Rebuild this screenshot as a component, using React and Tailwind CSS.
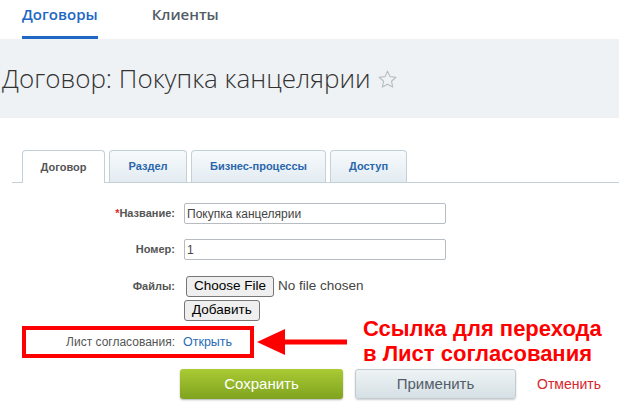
export default function App() {
  const arial = { fontFamily: '"Liberation Sans", Arial, sans-serif' };
  return (
    <div className="w-[619px] h-[408px] overflow-hidden bg-white" style={arial}>
      {/* Top nav */}
      <div className="h-[39px] flex items-end pl-[22px] gap-[54px] font-['Open_Sans',sans-serif] text-[15px] font-semibold">
        <div className="h-[39px] flex flex-col justify-between">
          <span className="text-[#2067c4] pt-[3px]">Договоры</span>
          <div className="h-[3px] bg-[#2067c4]" />
        </div>
        <div className="h-[39px]">
          <span className="text-[#535c69] block pt-[3px]">Клиенты</span>
        </div>
      </div>

      {/* Title band */}
      <div className="h-[79px] bg-[#eef2f4] flex items-center pl-[2px] gap-[6px]">
        <h1 className="font-['Open_Sans',sans-serif] font-light text-[26px] text-[#333] leading-none pb-[1px]">
          Договор: Покупка канцелярии
        </h1>
        <svg width="21" height="21" viewBox="0 0 24 24" className="mt-[2px]">
          <path
            d="M12 2.5l2.9 6.2 6.7.7-5 4.6 1.4 6.7L12 17.3l-5.9 3.4 1.4-6.7-5-4.6 6.7-.7z"
            fill="none"
            stroke="#b9bdc2"
            strokeWidth="1.3"
            strokeLinejoin="round"
          />
        </svg>
      </div>

      {/* Tabs */}
      <div className="mt-[32px] ml-[12px] border-b border-[#c3d0d6] flex items-end gap-[4px] pl-[10px] h-[33px]">
        <div className="h-[33px] w-[83px] -mb-px bg-white border border-b-0 border-[#c3d0d6] rounded-t-[4px] flex items-center justify-center text-[11px] font-bold text-[#555]">
          Договор
        </div>
        {[
          ["Раздел", "w-[78px]"],
          ["Бизнес-процессы", "w-[135px]"],
          ["Доступ", "w-[77px]"],
        ].map(([t, w]) => (
          <div
            key={t}
            className={`h-[32px] ${w} bg-gradient-to-b from-[#f7fafc] to-[#e3ecf2] border border-b-0 border-[#c3d0d6] rounded-t-[4px] flex items-center justify-center text-[11px] font-bold text-[#2a66ac]`}
          >
            {t}
          </div>
        ))}
      </div>

      {/* Form */}
      <div className="text-[11px] pt-[20px]">
        <div className="flex items-center gap-[9px] h-[21px]">
          <div className="w-[175px] text-right font-bold text-[#555]">
            <span className="text-[#e0262b]">*</span>Название:
          </div>
          <div className="w-[262px] h-[21px] border border-[#b6bcc2] rounded-[2px] flex items-center px-[2px] text-[12px] text-[#444]">
            Покупка канцелярии
          </div>
        </div>
        <div className="flex items-center gap-[9px] h-[21px] mt-[15px]">
          <div className="w-[175px] text-right font-bold text-[#555]">Номер:</div>
          <div className="w-[262px] h-[21px] border border-[#b6bcc2] rounded-[2px] flex items-center px-[2px] text-[12px] text-[#444]">
            1
          </div>
        </div>
        <div className="flex items-start gap-[9px] mt-[16px]">
          <div className="w-[175px] text-right font-bold text-[#555] pt-[2px]">Файлы:</div>
          <div className="flex flex-col items-start gap-[3px] text-[13.5px]">
            <div className="flex items-center gap-[4px] ml-[2px]">
              <div className="h-[21px] px-[7px] bg-[#efefef] border border-[#767676] rounded-[3px] flex items-center text-black">
                Choose File
              </div>
              <span className="text-[#444]">No file chosen</span>
            </div>
            <div className="h-[21px] px-[7px] bg-[#efefef] border border-[#767676] rounded-[3px] flex items-center text-black">
              Добавить
            </div>
          </div>
        </div>

        {/* Highlighted row with annotation */}
        <div className="flex items-center h-[32px] mt-[5px] ml-[22px]">
          <div className="w-[232px] h-[32px] border-4 border-[#ff0000] flex items-center gap-[8px] text-[12px]">
            <div className="w-[149px] text-right text-[#555]">Лист согласования:</div>
            <span className="text-[#2a6bb7] text-[12.5px]">Открыть</span>
          </div>
          <svg width="92" height="28" viewBox="0 0 92 28" className="ml-[3px]">
            <polygon points="0,14 28,1 28,27" fill="#ff0000" />
            <rect x="26" y="11.5" width="64" height="5" fill="#ff0000" />
          </svg>
          <div className="ml-[14px] text-[22px] font-bold leading-[25px] text-[#ff0000] whitespace-nowrap -mt-[2px]">
            Ссылка для перехода
            <br />в Лист согласования
          </div>
        </div>

        {/* Buttons */}
        <div className="flex items-center mt-[11px] pl-[180px]">
          <div className="w-[163px] h-[30px] rounded-[3px] bg-gradient-to-b from-[#aacb34] to-[#7fa31f] shadow-[0_1px_2px_rgba(0,0,0,0.3)] flex items-center justify-center text-white text-[15px]">
            Сохранить
          </div>
          <div className="ml-[12px] w-[161px] h-[30px] rounded-[3px] border border-[#c1ccd1] bg-gradient-to-b from-[#eef3f5] to-[#d5e0e4] shadow-[0_1px_2px_rgba(0,0,0,0.2)] flex items-center justify-center text-[#535c69] text-[15px]">
            Применить
          </div>
          <span className="ml-[21px] text-[#d7262c] text-[14px]">Отменить</span>
        </div>
      </div>
    </div>
  );
}
